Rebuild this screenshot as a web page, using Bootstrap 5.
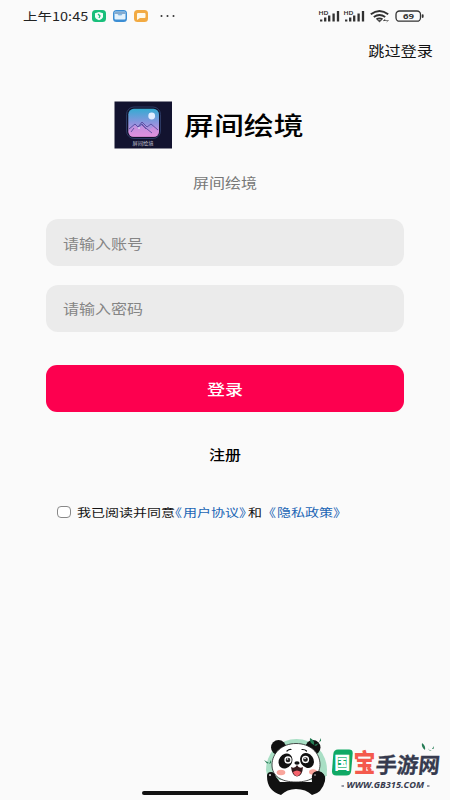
<!DOCTYPE html>
<html lang="zh-CN">
<head>
<meta charset="utf-8">
<meta name="viewport" content="width=device-width, initial-scale=1">
<title>屏间绘境</title>
<link href="https://cdn.jsdelivr.net/npm/bootstrap@5.3.0/dist/css/bootstrap.min.css" rel="stylesheet">
<style>
  body { background: #fafafa; color: #111; font-family: "Noto Sans CJK SC", sans-serif; }
  .screen { width: 450px; height: 800px; overflow: hidden; }
  /* wide lettering: full advance, reduced height */
  .squat { display: inline-block; transform: scaleY(.82); white-space: nowrap; line-height: 1; }
  .status { height: 32px; padding: 0 25px 0 23px; }
  .clock { font-size: 14.5px; color: #222; width: 67px; }
  .skip { height: 36px; padding-right: 17px; font-size: 16.2px; }
  .brand { margin-top: 33px; height: 48px; padding-left: 114px; gap: 12px; }
  .brand-name { font-size: 29.9px; font-weight: 500; color: #000; }
  .tagline { height: 22px; margin-top: 22px; font-size: 16px; color: #777; }
  .login-form { margin: 26px 46px 0; }
  .field { height: 47px; border: 0; border-radius: 12px; background: #ebebeb; padding: 0 17px; font-size: 16px; color: #858585; }
  .field + .field { margin-top: 18.5px; }
  .submit { height: 47px; margin-top: 33px; border: 0; border-radius: 11px; background: #fd004f; color: #fff; font-size: 18px; font-weight: 500; padding: 0; }
  .submit:hover { background: #e80048; color: #fff; }
  .register { margin-top: 30px; height: 24px; font-size: 16px; font-weight: 500; color: #000; }
  .terms { margin: 35px 0 0 57px; height: 22px; font-size: 14px; color: #151515; }
  .tick { width: 14px; height: 12px; border: 1px solid #888; border-radius: 4px; background: #fff; margin-right: 6px; }
  .terms a { color: #1c66b5; }
  .terms b { display: inline-block; width: 8px; font-weight: 400; font-feature-settings: "halt"; }
  .joiner { width: 22px; padding-left: 1px; }
  .homebar { left: 142px; top: 791px; width: 166px; height: 4px; border-radius: 2px; background: #111; }
  .watermark { left: 248px; top: 725px; }
</style>
</head>
<body>
<main class="screen position-relative">
  <header class="status d-flex align-items-center justify-content-between">
    <div class="d-flex align-items-center">
      <span class="clock squat">上午10:45</span>
      <svg width="90" height="16" viewBox="0 0 90 16">
        <rect x="2" y="2" width="14" height="12" rx="3.5" fill="#18bf7b"/>
        <path d="M9 4l4 1.2v3.2c0 1.8-1.8 3-4 3.800-2.200-.8-4-2-4-3.800V5.200z" fill="#f3fffa"/><path d="M8 6l2 2-1 2" fill="none" stroke="#18bf7b" stroke-width="1.300"/>
        <rect x="23" y="2" width="14" height="12" rx="3.500" fill="#3c8ed4"/>
        <rect x="24.500" y="3.500" width="11" height="3" rx="1" fill="#bddcf2"/><path d="M24.500 6h3l1 1.300h3l1-1.300h3v4.500q0 1-1 1h-9q-1 0-1-1z" fill="#e3f2fc"/><path d="M25 5h10" stroke="#315f9a" stroke-width=".8"/>
        <rect x="44" y="2" width="14" height="12" rx="3.500" fill="#f2aa42"/>
        <path d="M48 5h6.500q1 0 1 1v3q0 1-1 1H50l-3 2V6q0-1 1-1z" fill="#fff9e9"/>
        <g fill="#333"><circle cx="71.500" cy="8" r="1"/><circle cx="77.500" cy="8" r="1"/><circle cx="83.500" cy="8" r="1"/></g>
      </svg>
    </div>
    <svg width="107" height="20" viewBox="318 6 107 20">
      <g font-family="Open Sans, sans-serif" font-size="5.600" font-weight="600" fill="#222">
        <text x="318.500" y="15" textLength="10" lengthAdjust="spacingAndGlyphs">HD</text>
        <text x="343.500" y="15" textLength="10" lengthAdjust="spacingAndGlyphs">HD</text>
      </g>
      <g stroke="#303030" stroke-width="2.300">
        <path d="M321.200 19.500V21.500M325.200 17.500V21.500M329.200 15.500V21.500M333.600 13.500V21.500M338 11V21.500"/>
        <path d="M346.200 19.500V21.500M350.200 17.500V21.500M354.200 15.500V21.500M358.600 13.500V21.500M363 11V21.500"/>
      </g>
      <g fill="none" stroke="#303030" stroke-width="1.900">
        <path d="M370.800 14.300q8.700-6.600 17.400 0M373.800 17q5.700-4 11.400 0"/><path d="M376.500 19.400q3-2 6 0"/>
      </g>
      <path d="M377.500 20.200h4l-2 1.700zM383 21l2-1.500v1h3.500M388.500 20.500l-2 1.500" fill="#303030" stroke="#303030" stroke-width=".5"/>
      <rect x="396" y="11" width="24.500" height="10.200" rx="3.500" fill="none" stroke="#333" stroke-width="1.300"/>
      <rect x="421.800" y="14.300" width="1.800" height="3.600" rx=".8" fill="#333"/>
      <text x="403" y="18.900" font-family="Open Sans, sans-serif" font-size="7.600" font-weight="700" fill="#333" textLength="11" lengthAdjust="spacingAndGlyphs">69</text>
    </svg>
  </header>

  <div class="skip d-flex align-items-center justify-content-end"><span class="squat">跳过登录</span></div>

  <section class="brand d-flex align-items-center">
    <svg class="flex-shrink-0" width="58" height="48" viewBox="0 0 58 48">
      <defs><linearGradient id="sky" x2="0" y2="1"><stop stop-color="#35abd2"/><stop offset=".5" stop-color="#8b94de"/><stop offset="1" stop-color="#e794df"/></linearGradient></defs>
      <rect x=".5" y=".5" width="57.500" height="47" fill="#12132f"/>
      <rect x="12.500" y="6" width="34" height="31.500" rx="7.500" fill="#10122b" stroke="#344471" stroke-width=".8"/>
      <rect x="14.300" y="7.800" width="30.700" height="28" rx="5.500" fill="url(#sky)"/>
      <path d="M15 30l6-6 4 4 4-5 6 6 5-4 5 4v2q0 5-5.500 5H20q-5.500 0-5.500-5z" fill="#dc8ddd" opacity=".55"/>
      <path d="M15 28l6-5 3 3 4-5 5 5 4-3 7 6M24 26l4-3 4 5M20 27l-3 4M28 24l10 8" fill="none" stroke="#55499e" stroke-width=".9"/>
      <circle cx="37.700" cy="15" r="3.400" fill="#e2edff"/><circle cx="25" cy="27" r=".8" fill="#fff"/>
      <text x="18.500" y="43.600" font-size="5" fill="#c8c9dc" textLength="21" lengthAdjust="spacingAndGlyphs">屏间绘境</text>
    </svg>
    <h1 class="brand-name squat m-0">屏间绘境</h1>
  </section>
  <p class="tagline d-flex align-items-center justify-content-center mb-0"><span class="squat">屏间绘境</span></p>

  <form class="login-form">
    <div class="field d-flex align-items-center"><span class="squat">请输入账号</span></div>
    <div class="field d-flex align-items-center"><span class="squat">请输入密码</span></div>
    <button type="button" class="submit btn w-100 d-flex align-items-center justify-content-center"><span class="squat">登录</span></button>
  </form>
  <div class="register d-flex align-items-center justify-content-center"><span class="squat">注册</span></div>

  <div class="terms d-flex align-items-center">
    <span class="tick"></span>
    <span class="squat">我已阅读并同意</span>
    <a href="#" class="squat text-decoration-none"><b>《</b>用户协议<b>》</b></a>
    <span class="squat joiner">和</span>
    <a href="#" class="squat text-decoration-none"><b>《</b>隐私政策<b>》</b></a>
  </div>

  <div class="homebar position-absolute"></div>
  <svg class="watermark position-absolute" width="202" height="75" viewBox="248 725 202 75">
    <rect x="248" y="725" width="202" height="75" fill="#fafafa"/>
    <path d="M267 776a30 30 0 1 1 60 0z" fill="#a9dfc5"/>
    <path d="M266 770a30.500 31 0 0 1 61 0l-2 10h-57z" fill="#a9dfc5"/>
    <g fill="#111">
      <circle cx="278.500" cy="747.500" r="7.500"/><circle cx="313" cy="747.500" r="7.500"/>
      <path d="M267 776q0-4 4-4 4 0 5 5l4 5h32q-1-4 1-8 3-4 8-2 5 3 4 9-3 12-13 14-6-6-16-6-9 0-15 6-14-4-14-19z"/>
    </g>
    <path d="M296 743.500c14 0 24 9 24 21 0 11-9 17.500-24 17.500s-24-6-24-17c0-12 10-21.500 24-21.500z" fill="#fff" stroke="#222" stroke-width=".8"/>
    <ellipse cx="285.500" cy="761" rx="6.500" ry="7.800" transform="rotate(35 285.500 761)" fill="#111"/>
    <ellipse cx="307" cy="760.500" rx="6.500" ry="7.800" transform="rotate(-35 307 760.500)" fill="#111"/>
    <g fill="#222" stroke="#fff" stroke-width="1.300"><circle cx="288" cy="760" r="3"/><circle cx="305.500" cy="759.500" r="3"/></g>
    <circle cx="287.500" cy="759" r=".8" fill="#fff"/><circle cx="305" cy="758.500" r=".8" fill="#fff"/>
    <path d="M287 751q2-1.800 4-1.500M302 749.500q3-.2 4.500 1.500" fill="none" stroke="#111" stroke-width="1.200" stroke-linecap="round"/>
    <ellipse cx="297" cy="763" rx="2.600" ry="1.700" fill="#111"/>
    <path d="M291 767q4 2 6-2 2 4 6 2-.5 9-6 9.500-5-.5-6-9.500z" fill="#34191b"/>
    <path d="M293 772q4-3 8 0-1.500 4-4 4.200-2.500-.2-4-4.200z" fill="#f5636c"/>
    <ellipse cx="281" cy="772.500" rx="4.300" ry="2.700" fill="#f9a69c"/><ellipse cx="313" cy="772" rx="4" ry="2.700" fill="#f9a69c"/>
    <path d="M312 779q-1-7 5-8 6 0 8 6l-3 8-9-1z" fill="#111"/>
    <circle cx="270" cy="775" r="1" fill="#ddd"/><circle cx="315" cy="775" r="1" fill="#888"/>
    <g fill="#257c55"><path d="M310 738q5 2 4 7-5-2-4-7zM314 745l5-2-3 3zM264 760l5 3-2 .5zM269 764l2-4v3zM319 742l2-4v3zM422 743q4 3 3 7-4-3-3-7zM428 748q1 3 4 2-3 2-4-2zM432 749l2-3-.5 3z"/></g>

    <path d="M338 749.500h11q4 0 3.700 4l-1.500 17.500q-.5 4.500-5 4.500h-10q-4.500 0-4.200-4.500l1.300-17q.5-4.500 4.700-4.500z" fill="#10a965"/>
    <text x="334.300" y="769.300" font-family="Noto Sans CJK SC, sans-serif" font-size="17" font-weight="900" fill="#fff" textLength="16" lengthAdjust="spacingAndGlyphs">国</text>
    <text x="353.500" y="772" font-family="Noto Sans CJK SC, sans-serif" font-size="25" font-weight="900" fill="#f45a4d" textLength="22" lengthAdjust="spacingAndGlyphs">宝</text>
    <text transform="translate(375 773) skewX(-6)" font-family="Noto Sans CJK SC, sans-serif" font-size="21.500" font-weight="700" fill="#363a4e" stroke="#363a4e" stroke-width=".3" textLength="64" lengthAdjust="spacingAndGlyphs">手游网</text>
    <path d="M341.500 786h2.500M427 786h2.500" stroke="#363a4e" stroke-width="1.200"/>
    <text x="346.500" y="788" font-family="Open Sans, sans-serif" font-size="8.600" font-weight="700" font-style="italic" fill="#363a4e" textLength="77.500" lengthAdjust="spacingAndGlyphs">WWW.GB315.COM</text>
  </svg>
</main>
<script src="https://cdn.jsdelivr.net/npm/bootstrap@5.3.0/dist/js/bootstrap.bundle.min.js"></script>
</body>
</html>
